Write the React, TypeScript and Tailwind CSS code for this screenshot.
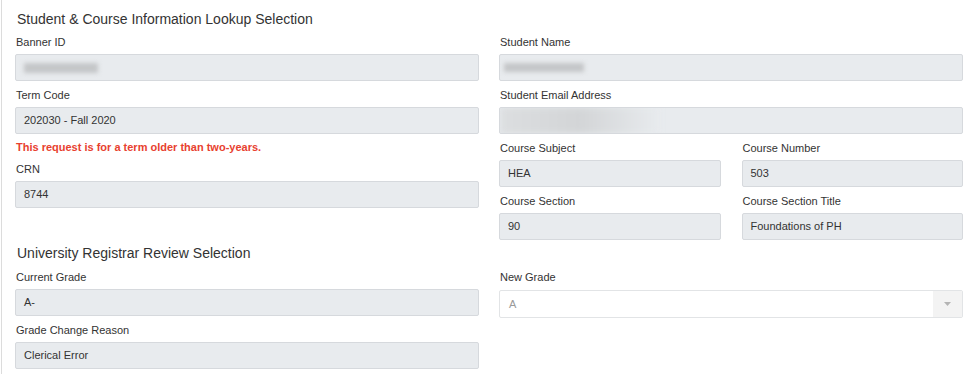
import React from 'react';

const font = { fontFamily: '"Liberation Sans", Arial, sans-serif' };

// blurred bar used to mask personal data
const Redacted: React.FC<{ className: string }> = ({ className }) => (
  <div className={`bg-[#c4c6c8] blur-[2px] ${className}`} />
);

const Field: React.FC<{ label: string; value?: string; children?: React.ReactNode }> = ({
  label,
  value,
  children,
}) => (
  <div className="flex flex-col">
    <label className="text-[11px] leading-4 text-[#333] mb-1 pl-px">{label}</label>
    <div className="h-[27px] bg-[#e8ebee] border border-[#d6d9dd] rounded-[2px] flex items-center pl-[8px] text-[11px] text-[#333] overflow-hidden">
      {children ?? value}
    </div>
  </div>
);

export default function App() {
  return (
    <div style={font} className="w-[975px] h-[374px] bg-white overflow-hidden">
      <div className="ml-[1px] h-full border-l border-[#dcdcdc] pl-[13px] pr-[12px]">
        <h2 className="pt-[9px] text-[14px] leading-5 text-[#333] pl-[2px]">
          Student &amp; Course Information Lookup Selection
        </h2>

        <div className="mt-[5px] grid grid-cols-2 gap-x-[20px] w-[948px]">
          {/* left column */}
          <div className="flex flex-col gap-[6px]">
            <Field label="Banner ID">
              <Redacted className="w-[74px] h-[10px]" />
            </Field>
            <div className="flex flex-col">
              <Field label="Term Code" value="202030 - Fall 2020" />
              <p className="mt-[5px] text-[11px] leading-4 font-bold text-[#e8412f] pl-px">
                This request is for a term older than two-years.
              </p>
            </div>
            <Field label="CRN" value="8744" />
          </div>

          {/* right column */}
          <div className="flex flex-col gap-[6px]">
            <Field label="Student Name">
              <Redacted className="w-[80px] h-[9px] -ml-[4px]" />
            </Field>
            <Field label="Student Email Address">
              <div className="-ml-[8px] w-[160px] h-[27px] bg-gradient-to-r from-[#dcdee0] via-[#d3d5d7] to-[#e8ebee] blur-[3px]" />
            </Field>
            <div className="grid grid-cols-2 gap-x-[21px] gap-y-[6px]">
              <Field label="Course Subject" value="HEA" />
              <Field label="Course Number" value="503" />
              <Field label="Course Section" value="90" />
              <Field label="Course Section Title" value="Foundations of PH" />
            </div>
          </div>
        </div>

        <h2 className="mt-[3px] text-[14px] leading-5 text-[#333] pl-[2px]">
          University Registrar Review Selection
        </h2>

        <div className="mt-[6px] grid grid-cols-2 gap-x-[20px] w-[948px]">
          <div className="flex flex-col gap-[6px]">
            <Field label="Current Grade" value="A-" />
            <Field label="Grade Change Reason" value="Clerical Error" />
          </div>
          <div className="flex flex-col">
            <label className="text-[11px] leading-4 text-[#333] mb-1 pl-px">New Grade</label>
            <div className="mt-px h-[28px] bg-white border border-[#e2e4e6] rounded-[2px] flex items-stretch">
              <div className="flex-1 flex items-center pl-[9px] text-[11px] text-[#9a9a9a]">A</div>
              <div className="w-[29px] bg-[#f3f3f3] flex items-center justify-center">
                <svg width="7" height="4" viewBox="0 0 7 4">
                  <path d="M0 0 L7 0 L3.5 4 Z" fill="#b4b4b4" />
                </svg>
              </div>
            </div>
          </div>
        </div>
      </div>
    </div>
  );
}
